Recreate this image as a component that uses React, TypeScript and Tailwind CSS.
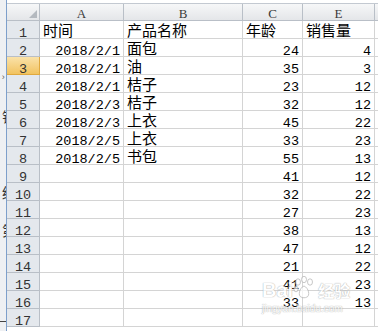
const rows: string[][] = [
  ["时间", "产品名称", "年龄", "销售量"],
  ["2018/2/1", "面包", "24", "4"],
  ["2018/2/1", "油", "35", "3"],
  ["2018/2/1", "桔子", "23", "12"],
  ["2018/2/3", "桔子", "32", "12"],
  ["2018/2/3", "上衣", "45", "22"],
  ["2018/2/5", "上衣", "33", "23"],
  ["2018/2/5", "书包", "55", "13"],
  ["", "", "41", "12"],
  ["", "", "32", "22"],
  ["", "", "27", "23"],
  ["", "", "38", "13"],
  ["", "", "47", "12"],
  ["", "", "21", "22"],
  ["", "", "41", "23"],
  ["", "", "33", "13"],
  ["", "", "", ""],
]

const isNum = (s: string) => /^[0-9/]+$/.test(s)

function Cell({ value, width }: { value: string; width: string }) {
  const num = isNum(value)
  return (
    <div
      className={`${width} shrink-0 h-full border-r border-b border-[#d4d4d4] flex items-end px-[3px] whitespace-nowrap ${
        num ? "justify-end text-[13.5px]" : "justify-start text-[15px]"
      }`}
    >
      <span className={num ? "leading-[9px]" : "leading-[11px]"}>{value}</span>
    </div>
  )
}

export default function App() {
  return (
    <div
      className="w-[378px] h-[331px] overflow-hidden flex bg-white text-black"
      style={{ fontFamily: '"Liberation Mono", "Noto Sans CJK SC", monospace' }}
    >
      {/* clipped panel on the left */}
      <div className="w-[7px] shrink-0 h-full bg-[#eef0f3] border-r border-[#7d9fcb] flex flex-col overflow-hidden text-[14px] text-[#333]">
        <div className="h-[74px] shrink-0" />
        <div className="h-[10px] shrink-0 flex justify-end items-center text-[9px] text-[#666]">›</div>
        <div className="h-[26px] shrink-0" />
        <div className="h-[16px] shrink-0 flex justify-end leading-[16px]">
          <span className="-mr-[10px]">销</span>
        </div>
        <div className="h-[60px] shrink-0" />
        <div className="h-[16px] shrink-0 flex justify-end leading-[16px]">
          <span className="-mr-[10px]">统</span>
        </div>
        <div className="h-[22px] shrink-0" />
        <div className="h-[16px] shrink-0 flex justify-end leading-[16px]">
          <span className="-mr-[10px]">第</span>
        </div>
        <div className="h-[81px] shrink-0" />
        <div className="h-[8px] shrink-0 flex justify-end items-start">
          <div className="w-[6px] h-[4px] border-t border-[#444]" />
        </div>
      </div>

      <div className="flex-1 flex flex-col min-w-0">
        <div className="h-[4px] shrink-0 bg-white border-b border-[#c3c9d1]" />

        {/* column headers */}
        <div
          className="h-[17px] shrink-0 flex text-[13px] text-[#3a3a3a] bg-gradient-to-b from-[#f6f7f8] to-[#e3e5e8]"
          style={{ fontFamily: '"Liberation Serif", serif' }}
        >
          <div className="w-[33px] shrink-0 h-full border-r border-b border-[#b9bfc7] flex items-end justify-end p-[2px]">
            <svg width="8" height="8" viewBox="0 0 8 8">
              <polygon points="8,0 8,8 0,8" fill="#b4b9bf" />
            </svg>
          </div>
          {[
            ["A", "w-[84px]"],
            ["B", "w-[119px]"],
            ["C", "w-[60px]"],
            ["E", "w-[72px]"],
          ].map(([l, w]) => (
            <div
              key={l}
              className={`${w} shrink-0 h-full border-r border-b border-[#b9bfc7] flex items-end justify-center leading-[12px]`}
            >
              {l}
            </div>
          ))}
          <div className="flex-1 h-full border-b border-[#b9bfc7]" />
        </div>

        {/* grid */}
        <div className="flex flex-col">
          {rows.map((r, i) => (
            <div key={i} className="h-[18px] shrink-0 flex">
              <div
                className={`w-[33px] shrink-0 h-full border-r border-b flex items-end justify-center text-[13.5px] leading-[9px] text-[#333] ${
                  i === 2
                    ? "bg-gradient-to-b from-[#fae2a8] to-[#f2c35f] border-[#e0a93f]"
                    : "bg-[#e4e8ed] border-[#b9bfc7]"
                }`}
              >
                <span>{i + 1}</span>
              </div>
              <Cell value={r[0]} width="w-[84px]" />
              <Cell value={r[1]} width="w-[119px]" />
              <Cell value={r[2]} width="w-[60px]" />
              <Cell value={r[3]} width="w-[72px]" />
              <div className="flex-1 h-full border-b border-[#d4d4d4]" />
            </div>
          ))}
        </div>
      </div>

      {/* baidu watermark */}
      <div className="absolute left-[262px] top-[276px] flex flex-col items-start pointer-events-none opacity-70">
        <div className="flex items-end text-white font-bold [text-shadow:0_0_1px_#9a9a9a,0_0_1px_#9a9a9a]">
          <span className="text-[20px] leading-[22px]" style={{ fontFamily: '"Liberation Sans", sans-serif' }}>
            Bai
          </span>
          <svg width="22" height="24" viewBox="0 0 22 24" className="mb-[1px]">
            <g fill="white" stroke="#a0a0a0" strokeWidth="0.8">
              <ellipse cx="5" cy="6" rx="2.5" ry="3.2" />
              <ellipse cx="11" cy="3.5" rx="2.5" ry="3.2" />
              <ellipse cx="17" cy="6" rx="2.5" ry="3.2" />
              <ellipse cx="3" cy="13" rx="2.2" ry="2.8" />
              <path d="M11 10 C6 12 5 20 8 21 C10 22 12 22 14 21 C17 20 16 12 11 10 Z" />
            </g>
          </svg>
          <span className="text-[16px] leading-[22px] ml-[3px]" style={{ fontFamily: '"Noto Sans CJK SC", sans-serif' }}>
            经验
          </span>
        </div>
        <div
          className="text-[10px] leading-[12px] text-white [text-shadow:0_0_1px_#9a9a9a,0_0_1px_#9a9a9a] mt-[2px]"
          style={{ fontFamily: '"Liberation Sans", sans-serif' }}
        >
          jingyan.baidu.com
        </div>
      </div>
    </div>
  )
}
